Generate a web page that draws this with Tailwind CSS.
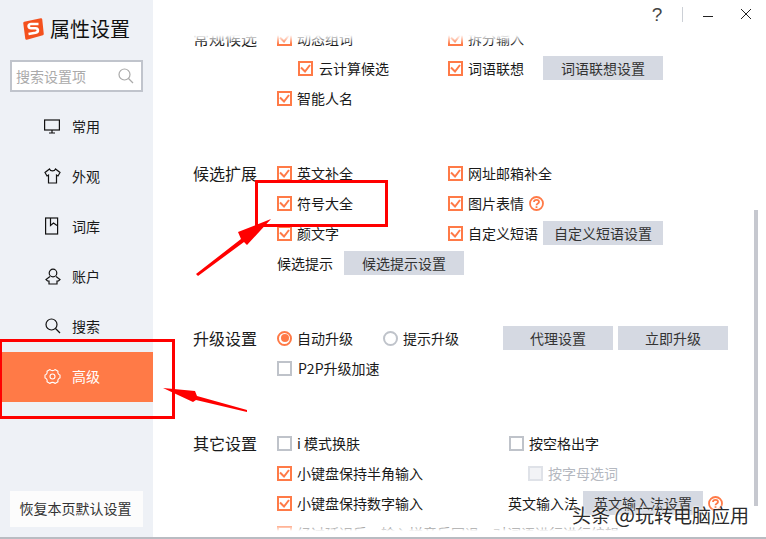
<!DOCTYPE html>
<html>
<head>
  <title>属性设置</title>
  <script src="https://cdn.jsdelivr.net/npm/@tailwindcss/browser@4"></script>
</head>

<body class="bg-white font-['Noto_Sans_CJK_SC','Liberation_Sans',sans-serif] text-[14px] text-[#1a1a1a]">
  <div class="relative flex h-[539px] w-[766px] overflow-hidden">

    <!-- sidebar -->
    <aside class="flex h-full w-[153px] shrink-0 flex-col bg-[#eef1f6]">
      <div class="flex h-[60px] items-center gap-[6px] pb-[2px] pl-[22px]">
        <svg width="22" height="22" viewBox="0 0 22 22">
          <path d="M2.500 5 19 1.500 20.500 16 4.500 20.500Z" fill="#f4511e" stroke="#f4511e" stroke-width="2.500" stroke-linejoin="round"/>
          <path d="M16.500 6H9C5.500 6.500 6 10.500 9.500 10.300H13C16.500 10 17 14 13.500 14.800L6.500 16" fill="none" stroke="#fff" stroke-width="2.600"/>
        </svg>
        <span class="text-[20px] leading-none text-[#111]">属性设置</span>
      </div>
      <div class="mx-[10px] flex h-[32px] items-center justify-between border-2 border-[#c0c4cc] bg-white pl-[4px] pr-[7px] text-[#aaa]">
        <span>搜索设置项</span>
        <svg width="16" height="16" viewBox="0 0 16 16" fill="none" stroke="#aaa" stroke-width="1.200">
          <circle cx="6.500" cy="6.500" r="5.500"/><path d="M10.500 10.500 15 15"/>
        </svg>
      </div>
      <nav class="mt-[10px] flex flex-col">
        <a class="flex h-[50px] items-center gap-[12px] pb-[2px] pl-[44px]">
          <svg width="16" height="15" viewBox="0 0 16 15" fill="none" stroke="#111" stroke-width="1.200"><rect x="0.600" y="1" width="14.800" height="10"/><path d="M8 11V14M5 14H11"/></svg>
          <span>常用</span>
        </a>
        <a class="flex h-[50px] items-center gap-[11px] pb-[2px] pl-[44px]">
          <svg width="17" height="16" viewBox="0 0 17 16" fill="none" stroke="#111" stroke-width="1.200"><path d="M5.500 1 1 4.500 3 8 4.500 7V15H12.500V7L14 8 16 4.500 11.500 1C10.500 3.500 6.500 3.500 5.500 1Z"/></svg>
          <span>外观</span>
        </a>
        <a class="flex h-[50px] items-center gap-[13px] pb-[2px] pl-[45px]">
          <svg width="14" height="18" viewBox="0 0 14 18" fill="none" stroke="#111" stroke-width="1.200"><rect x="0.600" y="1" width="12" height="16"/><path d="M5.500 1V8.500L8.500 6 12 8.500"/></svg>
          <span>词库</span>
        </a>
        <a class="flex h-[50px] items-center gap-[11px] pb-[2px] pl-[45px]">
          <svg width="16" height="17" viewBox="0 0 16 17" fill="none" stroke="#111" stroke-width="1.200"><circle cx="8" cy="5" r="3.800"/><path d="M5 8.500 1 11.500 2.500 13H4V16H12V13H13.500L15 11.500 11 8.500"/></svg>
          <span>账户</span>
        </a>
        <a class="flex h-[50px] items-center gap-[11px] pb-[2px] pl-[45px]">
          <svg width="16" height="16" viewBox="0 0 16 16" fill="none" stroke="#111" stroke-width="1.200"><circle cx="6.500" cy="6.500" r="5.500"/><path d="M10.500 10.500 15 15"/></svg>
          <span>搜索</span>
        </a>
        <a class="flex h-[50px] items-center gap-[11px] bg-[#ff7a47] pb-[2px] pl-[44px] text-white">
          <svg width="17" height="17" viewBox="0 0 17 17" fill="none" stroke="#fff" stroke-width="1.100" stroke-linejoin="round"><path d="M6 1.500C7 3 10 3 11 1.500L14 3.300C13.300 5 14.700 6.800 16 7V10C14.700 10.200 13.300 12 14 13.700L11 15.500C10 14 7 14 6 15.500L3 13.700C3.700 12 2.300 10.200 1 10V7C2.300 6.800 3.700 5 3 3.300Z"/><circle cx="8.500" cy="8.500" r="2.500"/></svg>
          <span>高级</span>
        </a>
      </nav>
      <button class="mx-[10px] mt-auto mb-[12px] h-[36px] bg-[#fcfcfc] pr-[2px] pb-[2px] text-[#333]">恢复本页默认设置</button>
    </aside>

    <!-- settings list -->
    <main class="flex flex-1 flex-col gap-[45px] pl-[40px] pt-[23px]">

      <section class="flex">
        <h3 class="h-[30px] w-[84px] text-[16px] leading-[30px]">常规候选</h3>
        <div class="flex flex-col">
          <div class="flex h-[30px] items-center">
            <label class="flex w-[171px] items-center gap-[5px]"><i class="flex size-[15px] items-center justify-center border-2 border-[#ff7a47]"><svg width="11" height="9" viewBox="0 0 11 9" fill="none" stroke="#ff7a47" stroke-width="2"><path d="M1 3.500 5 7.500 10 1"/></svg></i>动态组词</label>
            <label class="flex items-center gap-[5px]"><i class="flex size-[15px] items-center justify-center border-2 border-[#ff7a47]"><svg width="11" height="9" viewBox="0 0 11 9" fill="none" stroke="#ff7a47" stroke-width="2"><path d="M1 3.500 5 7.500 10 1"/></svg></i>拆分输入</label>
          </div>
          <div class="flex h-[30px] items-center">
            <label class="flex w-[171px] items-center gap-[6px] pl-[21px]"><i class="flex size-[15px] items-center justify-center border-2 border-[#ff7a47]"><svg width="11" height="9" viewBox="0 0 11 9" fill="none" stroke="#ff7a47" stroke-width="2"><path d="M1 3.500 5 7.500 10 1"/></svg></i>云计算候选</label>
            <label class="flex w-[95px] items-center gap-[5px]"><i class="flex size-[15px] items-center justify-center border-2 border-[#ff7a47]"><svg width="11" height="9" viewBox="0 0 11 9" fill="none" stroke="#ff7a47" stroke-width="2"><path d="M1 3.500 5 7.500 10 1"/></svg></i>词语联想</label>
            <button class="h-[24px] w-[120px] bg-[#d5d9e2] text-[#333]">词语联想设置</button>
          </div>
          <div class="flex h-[30px] items-center">
            <label class="flex items-center gap-[5px]"><i class="flex size-[15px] items-center justify-center border-2 border-[#ff7a47]"><svg width="11" height="9" viewBox="0 0 11 9" fill="none" stroke="#ff7a47" stroke-width="2"><path d="M1 3.500 5 7.500 10 1"/></svg></i>智能人名</label>
          </div>
        </div>
      </section>

      <section class="flex">
        <h3 class="h-[30px] w-[84px] text-[16px] leading-[30px]">候选扩展</h3>
        <div class="flex flex-col">
          <div class="flex h-[30px] items-center">
            <label class="flex w-[171px] items-center gap-[5px]"><i class="flex size-[15px] items-center justify-center border-2 border-[#ff7a47]"><svg width="11" height="9" viewBox="0 0 11 9" fill="none" stroke="#ff7a47" stroke-width="2"><path d="M1 3.500 5 7.500 10 1"/></svg></i>英文补全</label>
            <label class="flex items-center gap-[5px]"><i class="flex size-[15px] items-center justify-center border-2 border-[#ff7a47]"><svg width="11" height="9" viewBox="0 0 11 9" fill="none" stroke="#ff7a47" stroke-width="2"><path d="M1 3.500 5 7.500 10 1"/></svg></i>网址邮箱补全</label>
          </div>
          <div class="flex h-[30px] items-center">
            <label class="flex w-[171px] items-center gap-[5px]"><i class="flex size-[15px] items-center justify-center border-2 border-[#ff7a47]"><svg width="11" height="9" viewBox="0 0 11 9" fill="none" stroke="#ff7a47" stroke-width="2"><path d="M1 3.500 5 7.500 10 1"/></svg></i>符号大全</label>
            <label class="flex items-center gap-[5px]"><i class="flex size-[15px] items-center justify-center border-2 border-[#ff7a47]"><svg width="11" height="9" viewBox="0 0 11 9" fill="none" stroke="#ff7a47" stroke-width="2"><path d="M1 3.500 5 7.500 10 1"/></svg></i>图片表情</label>
            <svg class="ml-[5px]" width="15" height="15" viewBox="0 0 15 15" fill="none" stroke="#ff7a47" stroke-width="1.800"><circle cx="7.500" cy="7.500" r="6.500"/><path d="M5 6C5 3.200 10 3.200 10 6 10 7.500 7.500 7.500 7.500 9.200M7.500 10.300V12"/></svg>
          </div>
          <div class="flex h-[30px] items-center">
            <label class="flex w-[171px] items-center gap-[5px]"><i class="flex size-[15px] items-center justify-center border-2 border-[#ff7a47]"><svg width="11" height="9" viewBox="0 0 11 9" fill="none" stroke="#ff7a47" stroke-width="2"><path d="M1 3.500 5 7.500 10 1"/></svg></i>颜文字</label>
            <label class="flex w-[95px] items-center gap-[5px]"><i class="flex size-[15px] shrink-0 items-center justify-center border-2 border-[#ff7a47]"><svg width="11" height="9" viewBox="0 0 11 9" fill="none" stroke="#ff7a47" stroke-width="2"><path d="M1 3.500 5 7.500 10 1"/></svg></i><span class="whitespace-nowrap">自定义短语</span></label>
            <button class="h-[24px] w-[120px] bg-[#d5d9e2] text-[#333]">自定义短语设置</button>
          </div>
          <div class="flex h-[30px] items-center gap-[11px]">
            <span>候选提示</span>
            <button class="h-[24px] w-[120px] bg-[#d5d9e2] text-[#333]">候选提示设置</button>
          </div>
        </div>
      </section>

      <section class="flex">
        <h3 class="h-[30px] w-[84px] text-[16px] leading-[30px]">升级设置</h3>
        <div class="flex flex-col">
          <div class="flex h-[30px] items-center">
            <label class="flex w-[106px] items-center gap-[5px]"><i class="flex size-[15px] items-center justify-center rounded-full border-2 border-[#ff7a47]"><b class="size-[8px] rounded-full bg-[#ff7a47]"></b></i>自动升级</label>
            <label class="flex w-[120px] items-center gap-[5px]"><i class="size-[15px] rounded-full border-2 border-[#bfc3ca]"></i>提示升级</label>
            <button class="h-[24px] w-[110px] bg-[#d5d9e2] text-[#333]">代理设置</button>
            <button class="ml-[5px] h-[24px] w-[110px] bg-[#d5d9e2] text-[#333]">立即升级</button>
          </div>
          <div class="flex h-[30px] items-center">
            <label class="flex items-center gap-[6px]"><i class="size-[15px] border-2 border-[#bfc3ca]"></i>P2P升级加速</label>
          </div>
        </div>
      </section>

      <section class="flex">
        <h3 class="h-[30px] w-[84px] text-[16px] leading-[30px]">其它设置</h3>
        <div class="flex flex-col">
          <div class="flex h-[30px] items-center">
            <label class="flex w-[232px] items-center gap-[5px]"><i class="size-[15px] border-2 border-[#bfc3ca]"></i>i 模式换肤</label>
            <label class="flex items-center gap-[5px]"><i class="size-[15px] border-2 border-[#bfc3ca]"></i>按空格出字</label>
          </div>
          <div class="flex h-[30px] items-center">
            <label class="flex w-[251px] items-center gap-[5px]"><i class="flex size-[15px] items-center justify-center border-2 border-[#ff7a47]"><svg width="11" height="9" viewBox="0 0 11 9" fill="none" stroke="#ff7a47" stroke-width="2"><path d="M1 3.500 5 7.500 10 1"/></svg></i>小键盘保持半角输入</label>
            <label class="flex items-center gap-[5px] text-[#b4b8c0]"><i class="size-[15px] border-2 border-[#dfe2e8] bg-[#f2f3f6]"></i>按字母选词</label>
          </div>
          <div class="flex h-[30px] items-center">
            <label class="flex w-[231px] items-center gap-[5px]"><i class="flex size-[15px] items-center justify-center border-2 border-[#ff7a47]"><svg width="11" height="9" viewBox="0 0 11 9" fill="none" stroke="#ff7a47" stroke-width="2"><path d="M1 3.500 5 7.500 10 1"/></svg></i>小键盘保持数字输入</label>
            <span class="w-[75px] whitespace-nowrap">英文输入法</span>
            <button class="h-[24px] w-[120px] bg-[#d5d9e2] text-[#333]">英文输入法设置</button>
            <svg class="ml-[5px]" width="15" height="15" viewBox="0 0 15 15" fill="none" stroke="#ff7a47" stroke-width="1.800"><circle cx="7.500" cy="7.500" r="6.500"/><path d="M5 6C5 3.200 10 3.200 10 6 10 7.500 7.500 7.500 7.500 9.200M7.500 10.300V12"/></svg>
          </div>
          <div class="flex h-[30px] items-center">
            <label class="flex items-center gap-[5px] whitespace-nowrap"><i class="flex size-[15px] items-center justify-center border-2 border-[#ff7a47]"></i>经过延迟后，输入拼音后回退，对词语进行进行编辑</label>
          </div>
        </div>
      </section>
    </main>

    <!-- fades over the scrolled list -->
    <div class="absolute top-0 left-[153px] h-[44px] w-[613px] bg-gradient-to-b from-white from-[80%] to-white/0"></div>
    <div class="absolute bottom-0 left-[153px] h-[16px] w-[613px] bg-gradient-to-t from-white from-[50%] to-white/0"></div>
    <div class="absolute bottom-0 left-0 h-[2px] w-full bg-[#b9bcc2]"></div>

    <!-- scrollbar -->
    <div class="absolute top-[210px] left-[754px] h-[296px] w-[4px] bg-[#c6c8cf]"></div>

    <!-- window buttons -->
    <div class="absolute top-[3px] left-[650px] flex h-[22px] items-center">
      <span class="w-[14px] text-center font-['Liberation_Sans'] text-[19px] leading-none text-[#444]">?</span>
      <i class="mr-[20px] ml-[18px] h-[15px] w-px bg-[#ccd0d6]"></i>
      <i class="mt-[4px] h-px w-[10px] bg-[#222]"></i>
      <svg class="ml-[28px]" width="10" height="10" viewBox="0 0 10 10" stroke="#222"><path d="M0 0 10 10M10 0 0 10"/></svg>
    </div>

    <!-- red annotations -->
    <div class="absolute top-[180px] left-[255px] h-[47px] w-[133px] border-[3px] border-[#f00]"></div>
    <div class="absolute top-[339px] left-[-1px] h-[80px] w-[176px] border-[3px] border-[#f00]"></div>
    <svg class="absolute top-0 left-0" width="766" height="539" fill="#f00">
      <path d="M196 274 241 239 238 232 271 219 247 245 244 242 198 276Z"/>
      <path d="M163 388 195 391 197 396 247 410 247 412 196 400 193 402Z"/>
    </svg>

    <!-- watermark -->
    <div class="absolute top-[500px] left-[572px] text-[19px] leading-[26px] whitespace-nowrap text-[#2a2a2a] [text-shadow:0_0_3px_#fff,0_0_2px_#fff]">头条 <span class="text-[22px]">@</span>玩转电脑应用</div>
  </div>
</body>
</html>
